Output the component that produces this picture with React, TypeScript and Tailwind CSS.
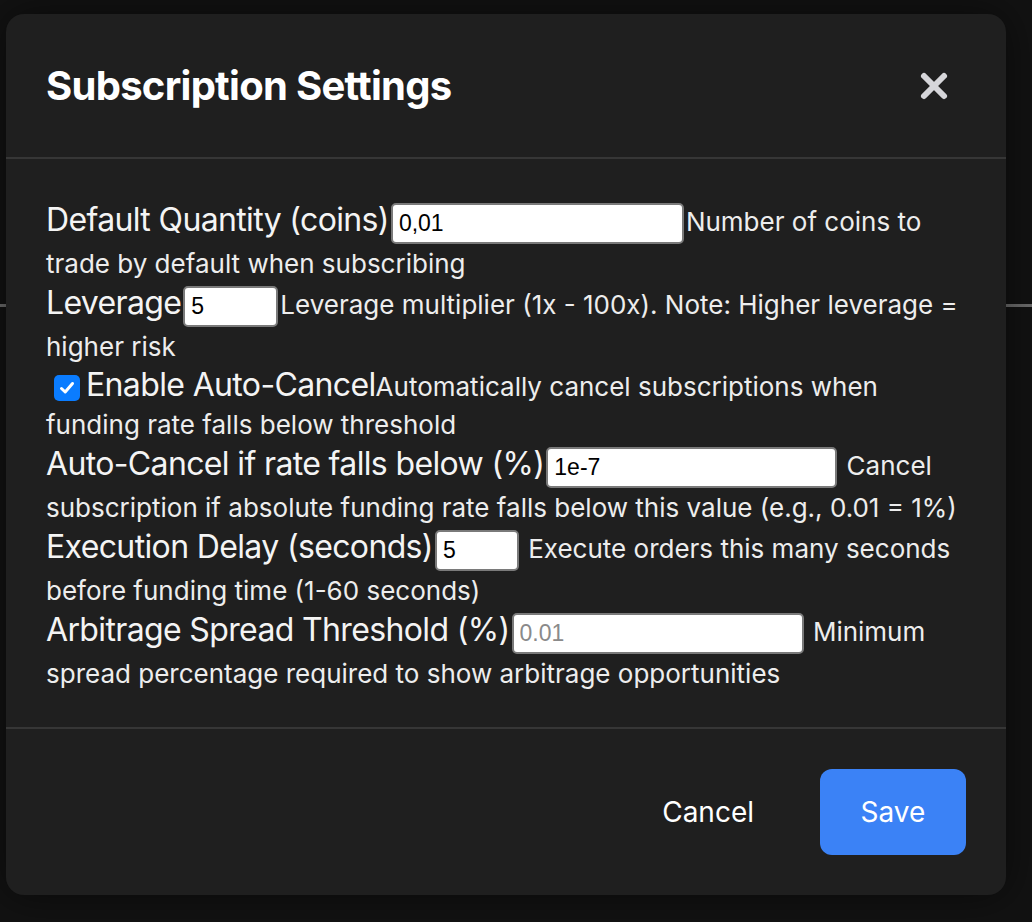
import { X } from "lucide-react"

type Field = {
  label: string
  value?: string
  placeholder?: string
  width: string
  spaced?: boolean
  help: string
}

const fields: Field[] = [
  {
    label: "Default Quantity (coins)",
    value: "0,01",
    width: "w-[293px]",
    help: "Number of coins to trade by default when subscribing",
  },
  {
    label: "Leverage",
    value: "5",
    width: "w-[95px]",
    help: "Leverage multiplier (1x - 100x). Note: Higher leverage = higher risk",
  },
]

const lowerFields: Field[] = [
  {
    label: "Auto-Cancel if rate falls below (%)",
    value: "1e-7",
    width: "w-[291px]",
    spaced: true,
    help: "Cancel subscription if absolute funding rate falls below this value (e.g., 0.01 = 1%)",
  },
  {
    label: "Execution Delay (seconds)",
    value: "5",
    width: "w-[84px]",
    spaced: true,
    help: "Execute orders this many seconds before funding time (1-60 seconds)",
  },
  {
    label: "Arbitrage Spread Threshold (%)",
    placeholder: "0.01",
    width: "w-[292px]",
    spaced: true,
    help: "Minimum spread percentage required to show arbitrage opportunities",
  },
]

const FieldRow = ({ field }: { field: Field }) => (
  <div>
    <label className="text-[32px] tracking-[-0.02em] text-[#f4f4f4]">
      {field.label}
    </label>
    <input
      readOnly
      value={field.value}
      placeholder={field.placeholder}
      className={`${field.width} ml-[2px] mr-[2px] inline-block h-[41px] rounded-[5px] border-2 border-[#7a7a7a] bg-white px-[6px] font-['Liberation_Sans',sans-serif] text-[23px] text-black placeholder:text-[#8a8a8a] outline-none`}
    />
    {field.spaced ? " " : ""}
    <span>{field.help}</span>
  </div>
)

export default function App() {
  return (
    <div className="relative min-h-screen overflow-hidden bg-[#121212] font-['Inter',sans-serif]">
      {/* page behind the overlay */}
      <div className="pt-[304px]">
        <div className="h-[3px] bg-[#6b6b6b]" />
      </div>

      <div className="absolute left-[6px] top-[14px] w-[1000px] rounded-[18px] bg-[#1f1f1f] shadow-[0_0_40px_rgba(0,0,0,0.5)]">
        <div className="flex h-[145px] items-center justify-between border-b-2 border-[#363636] px-[40px]">
          <h2 className="text-[40px] font-bold tracking-[-0.018em] text-white">
            Subscription Settings
          </h2>
          <button
            type="button"
            className="flex h-[64px] w-[64px] items-center justify-center text-[#d6d6da]"
          >
            <X size={40} strokeWidth={3.6} />
          </button>
        </div>

        <div className="px-[40px] pt-[41px] pb-[34px] text-[26px] leading-[39px] text-[#ededed]">
          {fields.map((f) => (
            <FieldRow key={f.label} field={f} />
          ))}
          <div className="leading-[38px]">
            <span className="ml-[8px] mr-[6px] inline-flex h-[26px] w-[26px] items-center justify-center rounded-[5px] bg-[#0a7cff] align-[-1px]">
              <svg width="18" height="18" viewBox="0 0 18 18" fill="none">
                <path
                  d="M3.5 9.5 L7.2 13 L14.5 4.5"
                  stroke="white"
                  strokeWidth="3"
                  strokeLinecap="round"
                  strokeLinejoin="round"
                />
              </svg>
            </span>
            <label className="text-[32px] tracking-[-0.02em] text-[#f4f4f4]">
              Enable Auto-Cancel
            </label>
            <span>
              Automatically cancel subscriptions when funding rate falls below
              threshold
            </span>
          </div>
          {lowerFields.map((f) => (
            <FieldRow key={f.label} field={f} />
          ))}
        </div>

        <div className="flex justify-end gap-[24px] border-t-2 border-[#363636] p-[40px]">
          <button
            type="button"
            className="h-[86px] px-[42px] text-[28px] text-white"
          >
            Cancel
          </button>
          <button
            type="button"
            className="h-[86px] w-[146px] rounded-[12px] bg-[#3b82f6] text-[28px] text-white"
          >
            Save
          </button>
        </div>
      </div>
    </div>
  )
}
